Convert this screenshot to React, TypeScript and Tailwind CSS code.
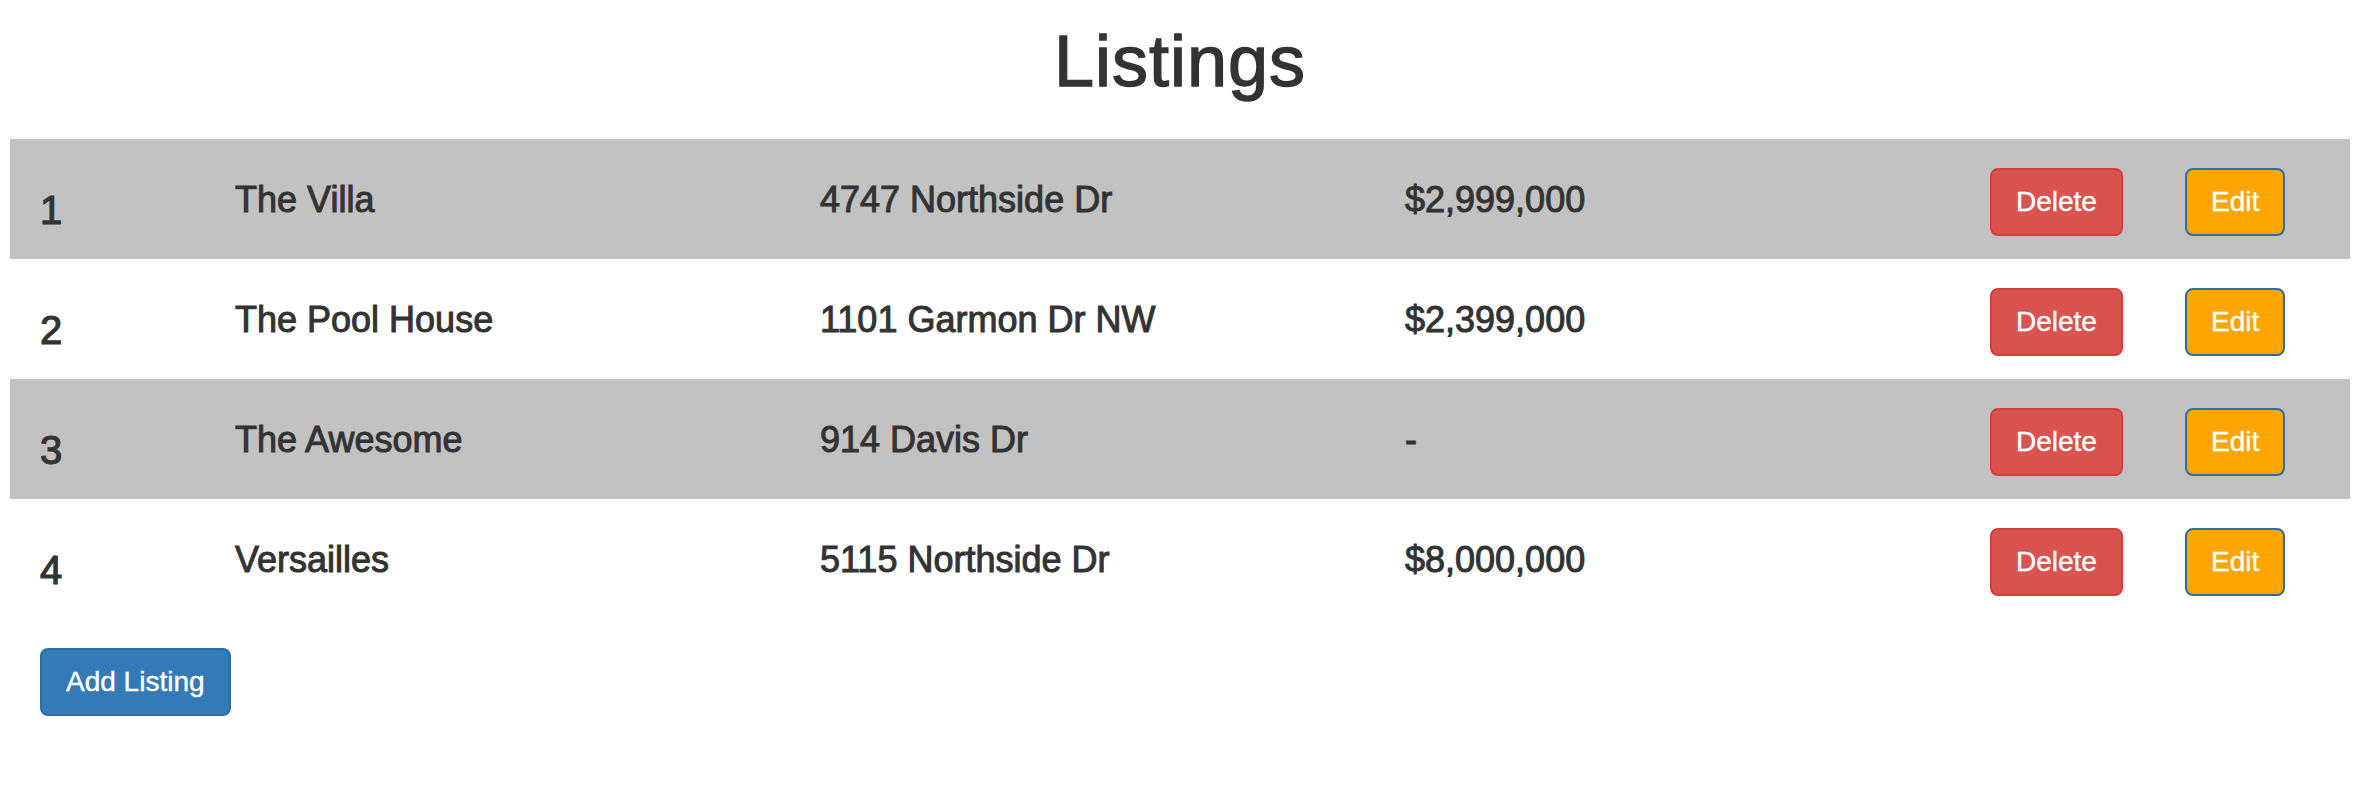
const listings = [
  { id: 1, name: "The Villa", address: "4747 Northside Dr", price: "$2,999,000" },
  { id: 2, name: "The Pool House", address: "1101 Garmon Dr NW", price: "$2,399,000" },
  { id: 3, name: "The Awesome", address: "914 Davis Dr", price: "-" },
  { id: 4, name: "Versailles", address: "5115 Northside Dr", price: "$8,000,000" },
];

function Row({ item, striped }: { item: (typeof listings)[number]; striped: boolean }) {
  return (
    <div className={`grid h-[120px] grid-cols-12 items-start ${striped ? "bg-[#c2c2c2]" : "bg-white"}`}>
      <div className="col-span-1 px-[30px] pt-[49px]">
        <h3 className="text-[40px] leading-[44px] font-medium [-webkit-text-stroke:1.2px_#333]">{item.id}</h3>
      </div>
      <div className="col-span-3 px-[30px] pt-[41px]">
        <h4 className="text-[36px] leading-[40px] font-medium [-webkit-text-stroke:1px_#333]">{item.name}</h4>
      </div>
      <div className="col-span-3 px-[30px] pt-[41px]">
        <h4 className="text-[36px] leading-[40px] font-medium [-webkit-text-stroke:1px_#333]">{item.address}</h4>
      </div>
      <div className="col-span-3 px-[30px] pt-[41px]">
        <h4 className="text-[36px] leading-[40px] font-medium [-webkit-text-stroke:1px_#333]">{item.price}</h4>
      </div>
      <div className="col-span-1 px-[30px] pt-[29px]">
        <button className="h-[68px] rounded-lg border-2 border-[#d43f3a] bg-[#d9534f] px-[24px] text-[28px] leading-[40px] text-white [-webkit-text-stroke:0.4px_#fff]">
          Delete
        </button>
      </div>
      <div className="col-span-1 px-[30px] pt-[29px]">
        <button className="h-[68px] rounded-lg border-2 border-[#2e6da4] bg-[#ffa500] px-[24px] text-[28px] leading-[40px] text-white [-webkit-text-stroke:0.4px_#fff]">
          Edit
        </button>
      </div>
    </div>
  );
}

export default function App() {
  return (
    <div className="min-h-[802px] bg-white font-['Liberation_Sans',Arial,sans-serif] text-[#333]">
      <div className="ml-[10px] w-[2340px]">
        <h1 className="pt-[22px] pb-[38px] text-center text-[72px] leading-[79px] font-medium tracking-[1px] [-webkit-text-stroke:1.4px_#333]">
          Listings
        </h1>
        <div>
          {listings.map((item, i) => (
            <Row key={item.id} item={item} striped={i % 2 === 0} />
          ))}
        </div>
        <div className="px-[30px] pt-[29px]">
          <button className="h-[68px] rounded-lg border-2 border-[#2e6da4] bg-[#337ab7] px-[24px] text-[28px] leading-[40px] text-white [-webkit-text-stroke:0.4px_#fff]">
            Add Listing
          </button>
        </div>
      </div>
    </div>
  );
}
